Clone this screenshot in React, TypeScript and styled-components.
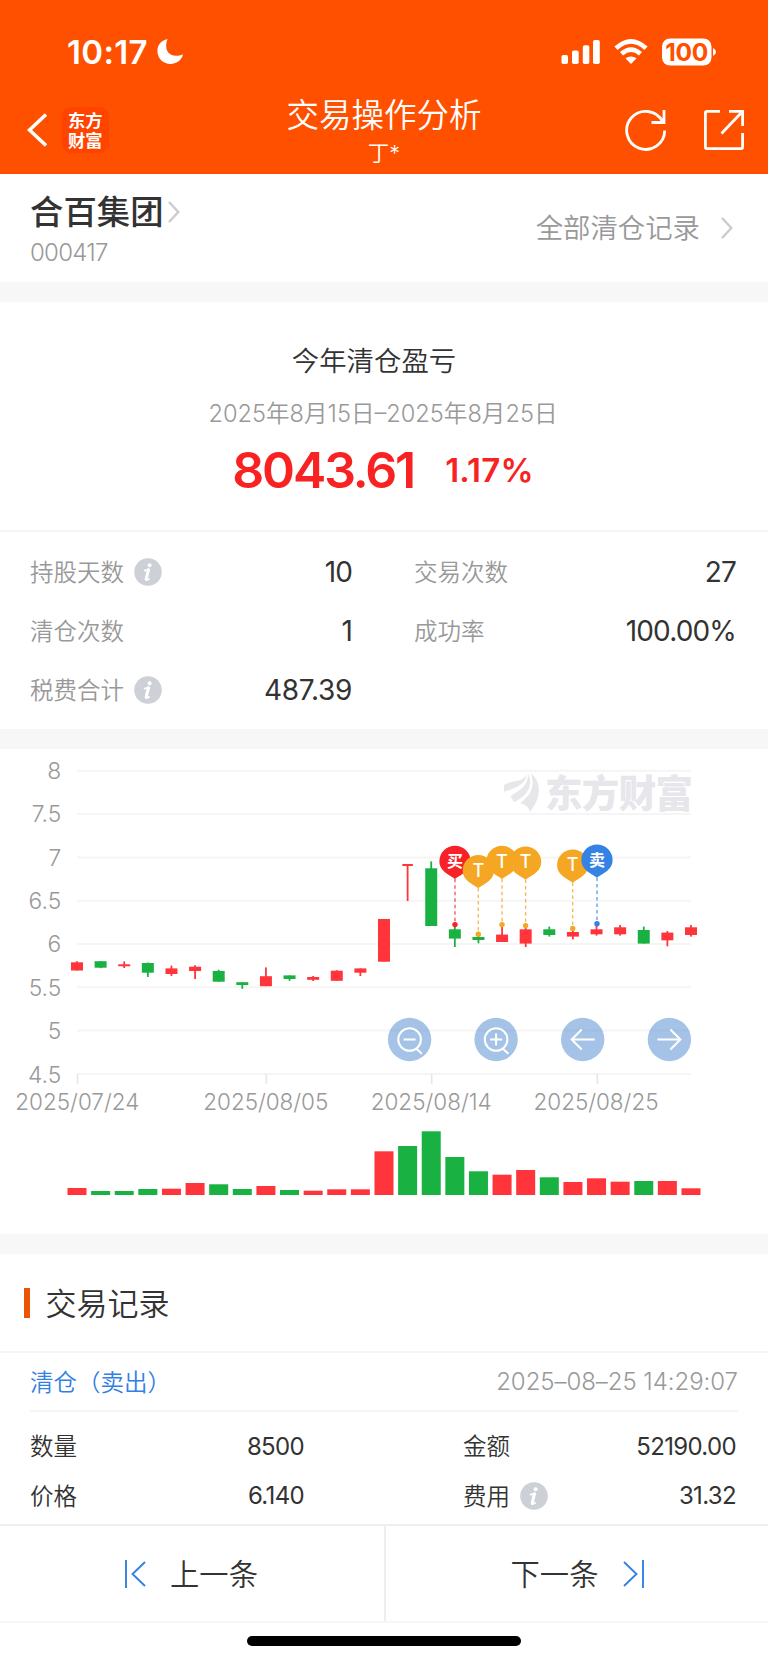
import React from "react";
import styled, { createGlobalStyle } from "styled-components";

const Global = createGlobalStyle`
  * { box-sizing: border-box; }
  body { margin: 0; background: #fff; }
`;

const Page = styled.main`
  width: 768px;
  height: 1663px;
  display: flex;
  flex-direction: column;
  overflow: hidden;
  background: #fff;
  color: #333;
  font-family: Inter, "Noto Sans CJK SC", sans-serif;
  font-weight: 350;
`;

const Header = styled.header`
  height: 173.5px;
  flex: none;
  background: #ff5000;
  color: #fff;
`;

const StatusBar = styled.div`
  height: 88px;
  padding: 15px 51px 0 67px;
  display: flex;
  align-items: center;
  justify-content: space-between;
`;

const Clock = styled.div`
  display: flex;
  align-items: center;
  gap: 9px;
  font-size: 33px;
  font-weight: 600;
  line-height: 40px;
  letter-spacing: 0.35px;
`;

const StatusIcons = styled.div`
  display: flex;
  align-items: center;
`;

const NavBar = styled.div`
  height: 85px;
  display: grid;
  grid-template-columns: 200px 1fr 200px;
`;

const NavSide = styled.div<{ $right?: boolean }>`
  display: flex;
  align-items: center;
  justify-content: ${(p) => (p.$right ? "flex-end" : "flex-start")};
  gap: ${(p) => (p.$right ? "36.5px" : "15px")};
  padding: ${(p) => (p.$right ? "0 23px 1px 0" : "0 0 1px 27px")};
`;

const AppLogo = styled.div`
  width: 46.5px;
  height: 46.5px;
  border-radius: 9px;
  background: #ff4400;
  display: flex;
  flex-direction: column;
  align-items: center;
  padding-top: 3.5px;
  font: 700 17.3px/19.5px "Noto Sans CJK SC", sans-serif;
`;

const TitleBlock = styled.div`
  text-align: center;
  padding-top: 6.5px;
`;

const NavTitle = styled.div`
  font-size: 32.5px;
  line-height: 42px;
  white-space: nowrap;
`;

const NavSubtitle = styled.div`
  font-size: 21.5px;
  line-height: 33px;
`;

const StockBar = styled.section`
  height: 108.5px;
  flex: none;
  padding: 0 35px 0 30px;
  display: flex;
  justify-content: space-between;
`;

const StockName = styled.div`
  display: flex;
  align-items: center;
  gap: 4px;
  padding-top: 16px;
  font-size: 33.4px;
  line-height: 44px;
  font-weight: 500;
`;

const StockCode = styled.div`
  font-size: 24px;
  line-height: 32px;
  margin-top: 3px;
  color: #999;
  letter-spacing: -0.75px;
`;

const AllRecords = styled.div`
  height: 108px;
  display: flex;
  align-items: center;
  gap: 21px;
  color: #999;
  font-size: 27.4px;
`;

const Raised = styled.span<{ $by?: number }>`
  padding-bottom: ${(p) => p.$by ?? 2}px;
`;

const Band = styled.div`
  height: 20px;
  flex: none;
  background: #f7f7f7;
`;

const Summary = styled.section`
  height: 230px;
  flex: none;
  border-bottom: 2px solid #f5f5f5;
  display: flex;
  flex-direction: column;
  align-items: center;
`;

const SummaryTitle = styled.div`
  margin: 38.5px 20px 0 0;
  font-size: 27.4px;
  line-height: 40px;
`;

const SummaryRange = styled.div`
  margin: 15px 2px 0 0;
  font-size: 23.6px;
  line-height: 36px;
  color: #999;
`;

const Profit = styled.div`
  display: flex;
  align-items: center;
  gap: 31px;
  color: #f82222;
  height: 56px;
  margin: 10px 2px 0 0;
`;

const ProfitValue = styled.span`
  font-size: 50px;
  font-weight: 600;
  letter-spacing: -2.1px;
`;

const ProfitRate = styled.span`
  font-size: 33px;
  font-weight: 600;
  letter-spacing: 0.2px;
`;

const Stats = styled.section`
  height: 197px;
  flex: none;
  padding: 10px 32px 0 30px;
  display: grid;
  grid-template-columns: 322px 322px;
  column-gap: 62px;
  grid-auto-rows: 59px;
`;

const Stat = styled.div`
  display: flex;
  align-items: center;
  justify-content: space-between;
`;

const Label = styled.span<{ $dark?: boolean }>`
  display: flex;
  align-items: center;
  gap: 10px;
  font-size: 23.5px;
  color: ${(p) => (p.$dark ? "#333" : "#999")};
`;

const StatValue = styled.span<{ $spacing?: number }>`
  font-size: 28px;
  font-weight: 380;
  letter-spacing: ${(p) => p.$spacing ?? -0.85}px;
`;

const ChartPanel = styled.section`
  height: 485px;
  flex: none;
`;

const Records = styled.section`
  height: 269.5px;
  flex: none;
`;

const RecordsHeading = styled.h2`
  margin: 0;
  height: 99px;
  padding-left: 24px;
  border-bottom: 2px solid #f5f5f5;
  display: flex;
  align-items: center;
  gap: 15.5px;
  font-size: 31px;
  font-weight: 350;
`;

const Accent = styled.i`
  width: 6px;
  height: 30px;
  background: #ea5504;
`;

const RecordTop = styled.div`
  margin: 0 30px;
  height: 59px;
  border-bottom: 2px solid #f5f5f5;
  display: flex;
  align-items: center;
  justify-content: space-between;
  font-size: 23.5px;
`;

const Side = styled(Raised)`
  color: #3380e3;
`;

const Time = styled.time`
  color: #999;
  font-size: 24px;
  letter-spacing: -0.05px;
`;

const RecordGrid = styled.div`
  padding: 9.5px 32px 0 30px;
  display: grid;
  grid-template-columns: 274px 273px;
  column-gap: 159px;
  grid-auto-rows: 49.5px;
`;

const RecordValue = styled.span`
  font-size: 24px;
  font-weight: 380;
  letter-spacing: -0.65px;
`;

const Pager = styled.nav`
  height: 99px;
  flex: none;
  border-top: 2px solid #eee;
  border-bottom: 2px solid #f7f7f7;
  display: grid;
  grid-template-columns: 385.5px 1fr;
`;

const PagerButton = styled.button<{ $first?: boolean }>`
  border: 0;
  background: none;
  padding: ${(p) => (p.$first ? "1px 1px 0 0" : "1px 0 0 1px")};
  font: 350 29.3px "Noto Sans CJK SC", sans-serif;
  color: #333;
  display: flex;
  align-items: center;
  justify-content: center;
  gap: 24.5px;
  ${(p) => p.$first && "border-right: 2px solid #eee;"}
`;

const HomeArea = styled.div`
  flex: 1;
  display: flex;
  justify-content: center;
  padding-top: 13px;
`;

const HomeIndicator = styled.div`
  width: 274px;
  height: 10px;
  border-radius: 5px;
  background: #000;
`;

const Chevron = () => (
  <svg width="12" height="22" viewBox="0 0 12 22" fill="none" stroke="#ccc" strokeWidth="2.4">
    <path d="M1 1 10.3 11 1 21" />
  </svg>
);

const Info = () => (
  <svg width="28" height="28" viewBox="0 0 28 28">
    <circle cx="14" cy="14" r="13.8" fill="#cdd0d6" />
    <circle cx="15.6" cy="7.2" r="2" fill="#fff" />
    <path d="M10.600 12.600 14.500 11.600 11.900 21.200Q11.900 23 15 21" fill="none" stroke="#fff" strokeWidth="2" strokeLinejoin="round" strokeLinecap="round" />
    <path d="M14.500 11.800 12.200 21" stroke="#fff" strokeWidth="3" strokeLinecap="round" />
  </svg>
);

const RED = "#ff353b";
const GREEN = "#19b141";
const LEFT = 77;
const STEP = 23.615;

/* colour, body top, body bottom, wick top, wick bottom, volume height */
type Day = [string, number, number, number, number, number];
const days: Day[] = [
  ["r", 222.3, 230.5, 221.2, 230.5, 7], ["g", 221.2, 227.7, 221.2, 228.2, 4],
  ["r", 224.3, 226.3, 221.4, 228, 4], ["g", 223, 232.7, 222.6, 237, 6],
  ["r", 228.4, 234, 225.6, 236, 6.3], ["r", 226.7, 231, 225.2, 239, 12],
  ["g", 231, 241.7, 229.7, 241.7, 10.7], ["g", 242.2, 245, 242.2, 248.8, 6],
  ["r", 236.2, 246.2, 227.4, 246.2, 9], ["g", 235.4, 239, 235.4, 240.8, 5],
  ["r", 237, 239.8, 236, 241, 4.3], ["r", 230.7, 240.8, 230.2, 240.8, 5.7],
  ["r", 228.4, 232.7, 228.4, 236, 5.7], ["r", 179, 221.7, 179, 221.7, 43.7],
  ["t", 124, 126, 124, 161, 49], ["g", 128.3, 186, 121.4, 186, 63.7],
  ["g", 189.3, 198.6, 186, 207, 38], ["g", 197, 200, 195, 203.3, 23.7],
  ["r", 194.6, 202, 185.3, 202, 20.3], ["r", 189.3, 203.6, 186.6, 207, 25],
  ["g", 189.3, 195, 186.6, 196.6, 17.7], ["r", 192, 196.6, 190, 199.3, 13],
  ["r", 189.3, 194.3, 185.3, 195.6, 16.7], ["r", 187.3, 194.3, 185, 195.6, 13.3],
  ["g", 190, 203.6, 186.6, 203.6, 14], ["r", 192.6, 200.3, 191, 206.3, 14],
  ["r", 187.3, 195, 185, 196.6, 6.7],
];

/* days whose volume bar is green although the candle is not */
const GREEN_VOLUME = [2, 14];

const AXIS = ["8", "7.5", "7", "6.5", "6", "5.5", "5", "4.5"];
const DATES: [string, number, number, number][] = [
  ["2025/07/24", 77.5, 77.3, 124], ["2025/08/05", 266.3, 265.8, 125],
  ["2025/08/14", 431.7, 431.2, 121], ["2025/08/25", 597.3, 596, 125],
];

/* glyph, colour, x, pin top, dot y */
const pins: [string, string, number, number, number][] = [
  ["买", "#f62227", 455, 96.8, 175.6], ["T", "#f5a623", 478.3, 106, 185.3],
  ["T", "#f5a623", 502, 96.8, 175.6], ["T", "#f5a623", 525.6, 97.4, 176.6],
  ["T", "#f5a623", 572.7, 100.4, 179.4], ["卖", "#3482e4", 597, 95.5, 174.8],
];

const Chart = () => (
  <svg width="768" height="485" viewBox="0 0 768 485" fontFamily="Inter, 'Noto Sans CJK SC', sans-serif">
    {AXIS.map((t, i) => (
      <g key={t}>
        <path d={`M77 ${21.8 + i * 43.3}H691`} stroke="#f5f5f6" strokeWidth="2" />
        <text x="61.2" y={30 + i * 43.37} fontSize="22.8" fill="#999" textAnchor="end">{t}</text>
      </g>
    ))}
    {DATES.map(([t, tick, x, w]) => (
      <g key={t}>
        <path d={`M${tick} 325V335`} stroke="#e6e6e6" strokeWidth="1.6" />
        <text x={x} y="360.5" fontSize="22.5" fill="#999" textAnchor="middle" textLength={w}>{t}</text>
      </g>
    ))}
    <g fill="#e6e6eb">
      <g transform="translate(495 16) scale(0.3333)">
        <path d="M27 60C52 44 84 54 96 27C92 58 62 70 27 80Z" />
        <path d="M47 94C72 74 98 68 100 27C116 66 94 94 57 111Z" />
        <path d="M76 114C106 92 122 66 108 25C142 54 138 100 105 141Q101 122 76 114Z" />
      </g>
      <text x="545" y="58" fontSize="37.500" fontWeight="900" textLength="148">东方财富</text>
    </g>
    {days.map(([c, top, bottom, hi, lo, vol], i) => {
      const x = LEFT + i * STEP;
      const fill = c === "g" ? GREEN : RED;
      const w = c === "t" ? 10.5 : 12;
      return (
        <g key={i} fill={fill}>
          <rect x={x - w / 2} y={top - 9} width={w} height={bottom - top} />
          <rect x={x - 0.9} y={hi - 9} width="1.8" height={lo - hi} />
          <rect x={x - 9.5} y={446 - vol} width="19" height={vol} fill={GREEN_VOLUME.includes(i) ? GREEN : fill} />
        </g>
      );
    })}
    {pins.map(([t, c, x, y, dot]) => (
      <g key={x} fill={c}>
        <path d={`M${x} ${y + 33}V${dot}`} stroke={c} strokeWidth="1.3" strokeDasharray="3.5 3" opacity="0.8" />
        <circle cx={x} cy={dot} r="2.7" />
        <path d={`M${x} ${y + 33.3}C${x - 5} ${y + 29} ${x - 15.6} ${y + 26} ${x - 15.6} ${y + 15.5}A15.6 15.5 0 0 1 ${x + 15.6} ${y + 15.5}C${x + 15.6} ${y + 26} ${x + 5} ${y + 29} ${x} ${y + 33.3}Z`} />
        <text x={x} y={y + (t === "T" ? 22 : 21.5)} fontSize={t === "T" ? 18 : 16} fontWeight={t === "T" ? 500 : 700} fill="#fff" textAnchor="middle">{t}</text>
      </g>
    ))}
    {[409.6, 496.1, 582.7, 669.4].map((x, i) => (
      <g key={x} transform={`translate(${x} 290.5)`} fill="none" stroke="#fff" strokeWidth="2">
        <circle r="21.7" fill="#3b7cc8" fillOpacity="0.46" stroke="none" />
        {i < 2 && <><circle r="11.3" /><path d="M6.500 9 12.300 14.300M-6 0H6" /></>}
        {i === 1 && <path d="M0-6V6" />}
        {i === 2 && <path d="M12 0H-11M-1-10-11 0-1 10" />}
        {i === 3 && <path d="M-12 0H11M1-10 11 0 1 10" />}
      </g>
    ))}
  </svg>
);

export default function App() {
  return (
    <Page>
      <Global />
      <Header>
        <StatusBar>
          <Clock>
            10:17
            <svg width="27" height="27" viewBox="0 0 27 27" fill="#fff">
              <path d="M10.500 1C2 3 0 9 .5 14.500 1.200 21 6.500 26 13.500 26 19 26 24.500 22.500 26 16.500 13 21 6 13 10.500 1Z" />
            </svg>
          </Clock>
          <StatusIcons>
            <svg width="161" height="30" viewBox="0 0 161 30" fill="#fff">
              <rect x="5.500" y="18" width="6.500" height="9" rx="1.800" />
              <rect x="16" y="13.500" width="6.700" height="13.500" rx="1.800" />
              <rect x="26.800" y="8.200" width="6.500" height="18.800" rx="1.800" />
              <rect x="37" y="3" width="6.800" height="24" rx="1.800" />
              <g fill="none" stroke="#fff" strokeWidth="4.600">
                <path d="M60 11.300Q75 -2.500 90 11.300" />
                <path d="M65.500 16.800Q75 8.500 84.500 16.800" />
              </g>
              <path d="M69.500 21.300Q75 17.500 80.500 21.300L75 27Z" />
              <rect x="106" y="1.500" width="49.500" height="27" rx="8" />
              <path d="M157 11Q160 12.500 160 15 160 17.500 157 19Z" />
              <text x="130.800" y="24" fontSize="24.500" fontWeight="700" fill="#ff5000" textAnchor="middle" textLength="43">100</text>
            </svg>
          </StatusIcons>
        </StatusBar>
        <NavBar>
          <NavSide>
            <svg width="20" height="34" viewBox="0 0 20 34" fill="none" stroke="#fff" strokeWidth="3.600">
              <path d="M19 1.500 2.500 17 19 32.500" />
            </svg>
            <AppLogo><span>东方</span><span>财富</span></AppLogo>
          </NavSide>
          <TitleBlock>
            <NavTitle>交易操作分析</NavTitle>
            <NavSubtitle>丁*</NavSubtitle>
          </TitleBlock>
          <NavSide $right>
            <svg width="42" height="42" viewBox="0 0 42 42" fill="none" stroke="#fff" strokeWidth="2.800">
              <path d="M39.700 21.500A19 19 0 1 1 37.500 12.500M39 1V13.500H26.500" />
            </svg>
            <svg width="42" height="42" viewBox="0 0 42 42" fill="none" stroke="#fff" strokeWidth="2.800">
              <path d="M17 2.400H4Q2.400 2.400 2.400 4V38Q2.400 39.600 4 39.600H38Q39.600 39.600 39.600 38V24M26 2.400H39.600V17M39 3 18.500 24.500" />
            </svg>
          </NavSide>
        </NavBar>
      </Header>

      <StockBar>
        <div>
          <StockName>合百集团<Chevron /></StockName>
          <StockCode>000417</StockCode>
        </div>
        <AllRecords><Raised $by={3}>全部清仓记录</Raised><Chevron /></AllRecords>
      </StockBar>
      <Band />

      <Summary>
        <SummaryTitle>今年清仓盈亏</SummaryTitle>
        <SummaryRange>2025年8月15日–2025年8月25日</SummaryRange>
        <Profit>
          <ProfitValue>8043.61</ProfitValue>
          <ProfitRate>1.17%</ProfitRate>
        </Profit>
      </Summary>

      <Stats>
        <Stat><Label><Raised>持股天数</Raised><Info /></Label><StatValue>10</StatValue></Stat>
        <Stat><Label><Raised>交易次数</Raised></Label><StatValue>27</StatValue></Stat>
        <Stat><Label><Raised>清仓次数</Raised></Label><StatValue>1</StatValue></Stat>
        <Stat><Label><Raised>成功率</Raised></Label><StatValue>100.00%</StatValue></Stat>
        <Stat><Label><Raised>税费合计</Raised><Info /></Label><StatValue $spacing={-0.3}>487.39</StatValue></Stat>
      </Stats>
      <Band />

      <ChartPanel><Chart /></ChartPanel>
      <Band />

      <Records>
        <RecordsHeading><Accent /><Raised>交易记录</Raised></RecordsHeading>
        <RecordTop><Side>清仓（卖出）</Side><Time>2025–08–25 14:29:07</Time></RecordTop>
        <RecordGrid>
          <Stat><Label $dark><Raised>数量</Raised></Label><RecordValue>8500</RecordValue></Stat>
          <Stat><Label $dark><Raised>金额</Raised></Label><RecordValue>52190.00</RecordValue></Stat>
          <Stat><Label $dark><Raised>价格</Raised></Label><RecordValue>6.140</RecordValue></Stat>
          <Stat><Label $dark><Raised>费用</Raised><Info /></Label><RecordValue>31.32</RecordValue></Stat>
        </RecordGrid>
      </Records>

      <Pager>
        <PagerButton $first>
          <svg width="21" height="28" viewBox="0 0 21 28" fill="none" stroke="#3380e3" strokeWidth="1.900">
            <path d="M1 0V28M20 2 7.500 14 20 26" />
          </svg>
          <Raised $by={4}>上一条</Raised>
        </PagerButton>
        <PagerButton>
          <Raised $by={4}>下一条</Raised>
          <svg width="21" height="28" viewBox="0 0 21 28" fill="none" stroke="#3380e3" strokeWidth="1.900">
            <path d="M20 0V28M1 2 13.500 14 1 26" />
          </svg>
        </PagerButton>
      </Pager>
      <HomeArea><HomeIndicator /></HomeArea>
    </Page>
  );
}
